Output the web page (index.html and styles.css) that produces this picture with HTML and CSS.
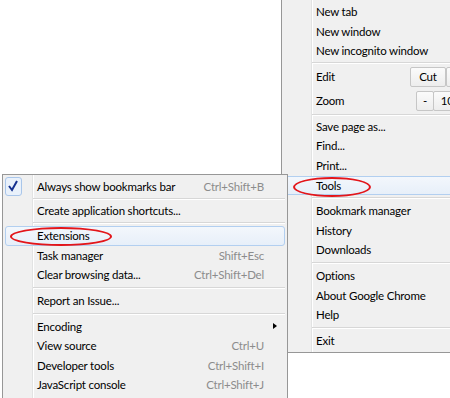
FILE: index.html
```html
<!DOCTYPE html>
<html lang="en">
<head>
    <meta charset="UTF-8">
    <title>Chrome menu - Tools</title>
    <link rel="stylesheet" href="styles.css">
</head>
<body>
    <!-- main wrench menu -->
    <div class="menu menu-main">
        <div class="item">New tab</div>
        <div class="item">New window</div>
        <div class="item">New incognito window</div>
        <div class="sep tight"></div>
        <div class="item item-tall">
            <span class="label label-edit">Edit</span>
            <span class="btn btn-cut">Cut</span>
            <span class="btn btn-copy">Copy</span>
        </div>
        <div class="item item-tall">
            <span class="label label-zoom">Zoom</span>
            <span class="btn btn-minus">-</span>
            <span class="btn btn-zoom">100%</span>
        </div>
        <div class="sep tight"></div>
        <div class="item">Save page as...</div>
        <div class="item">Find...</div>
        <div class="item">Print...</div>
        <div class="item hover">Tools</div>
        <div class="sep"></div>
        <div class="item">Bookmark manager</div>
        <div class="item">History</div>
        <div class="item">Downloads</div>
        <div class="sep"></div>
        <div class="item">Options</div>
        <div class="item">About Google Chrome</div>
        <div class="item">Help</div>
        <div class="sep"></div>
        <div class="item">Exit</div>
    </div>

    <!-- tools submenu -->
    <div class="menu menu-tools">
        <div class="item">
            <span class="check">
                <svg width="17" height="19" viewBox="0 0 17 19"><polyline points="4,9 7,13 12,4" fill="none" stroke="#14308f" stroke-width="2"/></svg>
            </span>
            Always show bookmarks bar
            <span class="key">Ctrl+Shift+B</span>
        </div>
        <div class="sep tight"></div>
        <div class="item">Create application shortcuts...</div>
        <div class="sep"></div>
        <div class="item hover">Extensions</div>
        <div class="item">Task manager <span class="key">Shift+Esc</span></div>
        <div class="item">Clear browsing data... <span class="key">Ctrl+Shift+Del</span></div>
        <div class="sep"></div>
        <div class="item">Report an Issue...</div>
        <div class="sep"></div>
        <div class="item">Encoding <span class="arrow"></span></div>
        <div class="item">View source <span class="key">Ctrl+U</span></div>
        <div class="item">Developer tools <span class="key">Ctrl+Shift+I</span></div>
        <div class="item">JavaScript console <span class="key">Ctrl+Shift+J</span></div>
    </div>

    <!-- red marks drawn on the screenshot -->
    <div class="mark mark-tools"></div>
    <div class="mark mark-ext"></div>
</body>
</html>
```

FILE: styles.css
```css
/* page */
html, body {
    margin: 0;
    padding: 0;
    width: 450px;
    height: 398px;
    overflow: hidden;
    background: #fff;
    font-family: Lato, "Open Sans", sans-serif;
    font-size: 11.5px;
    letter-spacing: -0.2px;
    color: #000;
}

/* menu box */
.menu {
    position: absolute;
    box-sizing: border-box;
    padding: 2px;
    border: 1px solid #979797;
    background: linear-gradient(to right, #f0f0f0 29px, #e2e3e3 29px, #e2e3e3 30px, #fff 30px, #fff 31px, #f0f0f0 31px);
}

.menu-main {
    left: 281px;
    top: -1px;
    width: 240px;
    height: 354px;
}

.menu-tools {
    left: 2px;
    top: 174px;
    width: 286px;
    height: 226px;
}

/* rows */
.item {
    position: relative;
    box-sizing: border-box;
    height: 19.6px;
    padding: 0 7px 0 32px;
    display: flex;
    align-items: center;
    line-height: 1;
    white-space: nowrap;
}

.item-tall {
    height: 24.5px;
}

.item.hover {
    border: 1px solid #b2cff0;
    border-radius: 3px;
    padding-left: 31px;
    background: linear-gradient(#f3f7fc, #e7eff9);
}

.sep {
    height: 6px;
    margin-left: 28px;
    box-sizing: border-box;
    padding-top: 2px;
}

.sep::after {
    content: "";
    display: block;
    height: 1px;
    background: #d7d7d7;
    border-bottom: 1px solid #fff;
}

.sep.tight {
    height: 3.5px;
    padding-top: 1px;
}

.menu-tools .sep.tight {
    height: 4px;
}

/* edit / zoom buttons */
.label-edit {
    width: 94px;
}

.label-zoom {
    width: 100px;
}

.btn {
    box-sizing: border-box;
    height: 20px;
    display: flex;
    align-items: center;
    justify-content: center;
    border: 1px solid #c6c6c6;
    border-radius: 2px;
    background: linear-gradient(#fbfbfb, #ededed);
}

.btn-cut {
    width: 36px;
}

.btn-copy {
    width: 44px;
}

.btn-minus {
    width: 18px;
}

.btn-zoom {
    width: 44px;
    margin-left: -1px;
}

/* tools submenu bits */
.check {
    position: absolute;
    left: 0;
    top: 0;
    box-sizing: border-box;
    width: 17px;
    height: 19px;
    border: 1px solid #a9c6ea;
    border-radius: 3px;
    background: #e9f1fb;
}

.check svg {
    position: absolute;
    left: -1px;
    top: -1px;
}

.key {
    margin-left: auto;
    margin-right: 14px;
    color: #8c8c8c;
}

.arrow {
    margin-left: auto;
    margin-right: 1px;
    width: 0;
    height: 0;
    border-left: 4px solid #000;
    border-top: 3px solid transparent;
    border-bottom: 3px solid transparent;
}

/* red ellipses */
.mark {
    position: absolute;
    box-sizing: border-box;
    border: 2px solid #e3151a;
    border-radius: 50%;
}

.mark-tools {
    left: 293px;
    top: 177px;
    width: 78px;
    height: 20px;
}

.mark-ext {
    left: 10px;
    top: 227px;
    width: 102px;
    height: 19px;
}
```
